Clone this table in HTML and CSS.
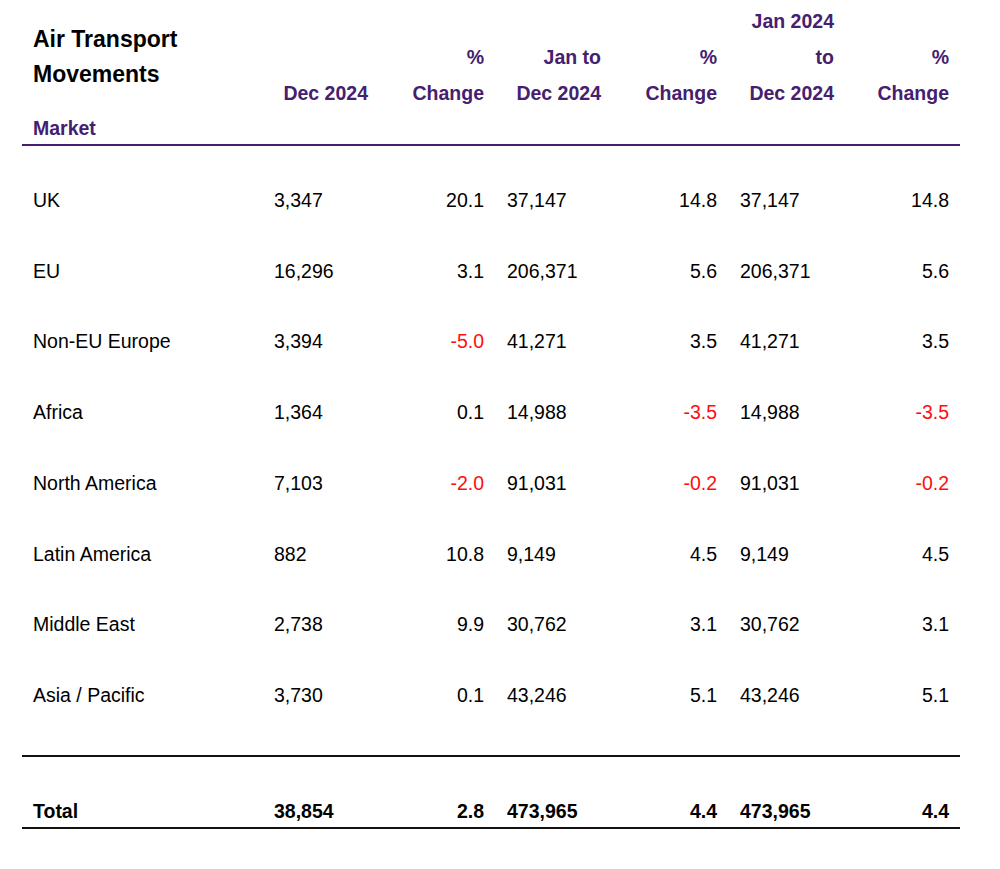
FILE: index.html
```html
<!DOCTYPE html>
<html lang="en">
<head>
<meta charset="utf-8">
<title>Air Transport Movements</title>
<link rel="stylesheet" href="styles.css">
</head>
<body>
<table class="atm">
  <colgroup>
    <col class="c-market">
    <col class="c-num">
    <col class="c-pct">
    <col class="c-num">
    <col class="c-pct2">
    <col class="c-num">
    <col class="c-pct3">
  </colgroup>
  <thead>
    <tr class="h1">
      <th class="title">Air Transport<br>Movements</th>
      <th class="hd">Dec 2024</th>
      <th class="hd">%<br>Change</th>
      <th class="hd">Jan to<br>Dec 2024</th>
      <th class="hd">%<br>Change</th>
      <th class="hd top">Jan 2024<br>to<br>Dec 2024</th>
      <th class="hd">%<br>Change</th>
    </tr>
    <tr class="h2">
      <th class="market">Market</th>
      <th></th><th></th><th></th><th></th><th></th><th></th>
    </tr>
  </thead>
  <tbody>
    <tr class="spacer-top"><td colspan="7"></td></tr>
    <tr class="row"><td>UK</td><td>3,347</td><td class="r">20.1</td><td>37,147</td><td class="r">14.8</td><td>37,147</td><td class="r">14.8</td></tr>
    <tr class="row"><td>EU</td><td>16,296</td><td class="r">3.1</td><td>206,371</td><td class="r">5.6</td><td>206,371</td><td class="r">5.6</td></tr>
    <tr class="row"><td>Non-EU Europe</td><td>3,394</td><td class="r neg">-5.0</td><td>41,271</td><td class="r">3.5</td><td>41,271</td><td class="r">3.5</td></tr>
    <tr class="row"><td>Africa</td><td>1,364</td><td class="r">0.1</td><td>14,988</td><td class="r neg">-3.5</td><td>14,988</td><td class="r neg">-3.5</td></tr>
    <tr class="row"><td>North America</td><td>7,103</td><td class="r neg">-2.0</td><td>91,031</td><td class="r neg">-0.2</td><td>91,031</td><td class="r neg">-0.2</td></tr>
    <tr class="row"><td>Latin America</td><td>882</td><td class="r">10.8</td><td>9,149</td><td class="r">4.5</td><td>9,149</td><td class="r">4.5</td></tr>
    <tr class="row"><td>Middle East</td><td>2,738</td><td class="r">9.9</td><td>30,762</td><td class="r">3.1</td><td>30,762</td><td class="r">3.1</td></tr>
    <tr class="row"><td>Asia / Pacific</td><td>3,730</td><td class="r">0.1</td><td>43,246</td><td class="r">5.1</td><td>43,246</td><td class="r">5.1</td></tr>
    <tr class="spacer-bottom"><td colspan="7"></td></tr>
    <tr class="total"><td>Total</td><td>38,854</td><td class="r">2.8</td><td>473,965</td><td class="r">4.4</td><td>473,965</td><td class="r">4.4</td></tr>
  </tbody>
</table>
</body>
</html>
```

FILE: styles.css
```css
html, body {
  margin: 0;
  padding: 0;
  background: #ffffff;
}

body {
  font-family: "Liberation Sans", Arial, sans-serif;
  color: #000000;
}

.atm {
  margin-left: 22px;
  width: 938px;
  table-layout: fixed;
  border-collapse: separate;
  border-spacing: 0;
  font-size: 19.5px;
}

.c-market { width: 241px; }
.c-num { width: 117px; }
.c-pct { width: 116px; }
.c-pct2 { width: 116px; }
.c-pct3 { width: 114px; }

.atm th,
.atm td {
  padding: 0 12px 0 11px;
  white-space: nowrap;
}

.atm th:last-child,
.atm td:last-child {
  padding-right: 11px;
}

.h1 th {
  vertical-align: bottom;
  text-align: right;
  color: #45206f;
  font-weight: bold;
  line-height: 36px;
}

.h1 th.top {
  padding-top: 3px;
}

.h1 th.title {
  vertical-align: top;
  text-align: left;
  color: #000000;
  font-size: 23px;
  line-height: 35px;
  padding-top: 22px;
}

.h2 th {
  line-height: 32px;
  height: 32px;
  padding-top: 1px;
  border-bottom: 2px solid #45206f;
  text-align: left;
  color: #45206f;
  font-weight: bold;
}

.spacer-top td {
  height: 19px;
  padding: 0;
}

.row td {
  line-height: 70.7px;
  text-align: left;
}

.atm td.r {
  text-align: right;
}

.atm td.neg {
  color: #ff0d0d;
}

.spacer-bottom td {
  height: 24.4px;
  padding: 0;
}

.total td {
  font-weight: bold;
  line-height: 32px;
  padding-top: 38px;
  border-top: 2px solid #111111;
  border-bottom: 2px solid #111111;
  text-align: left;
}
```
